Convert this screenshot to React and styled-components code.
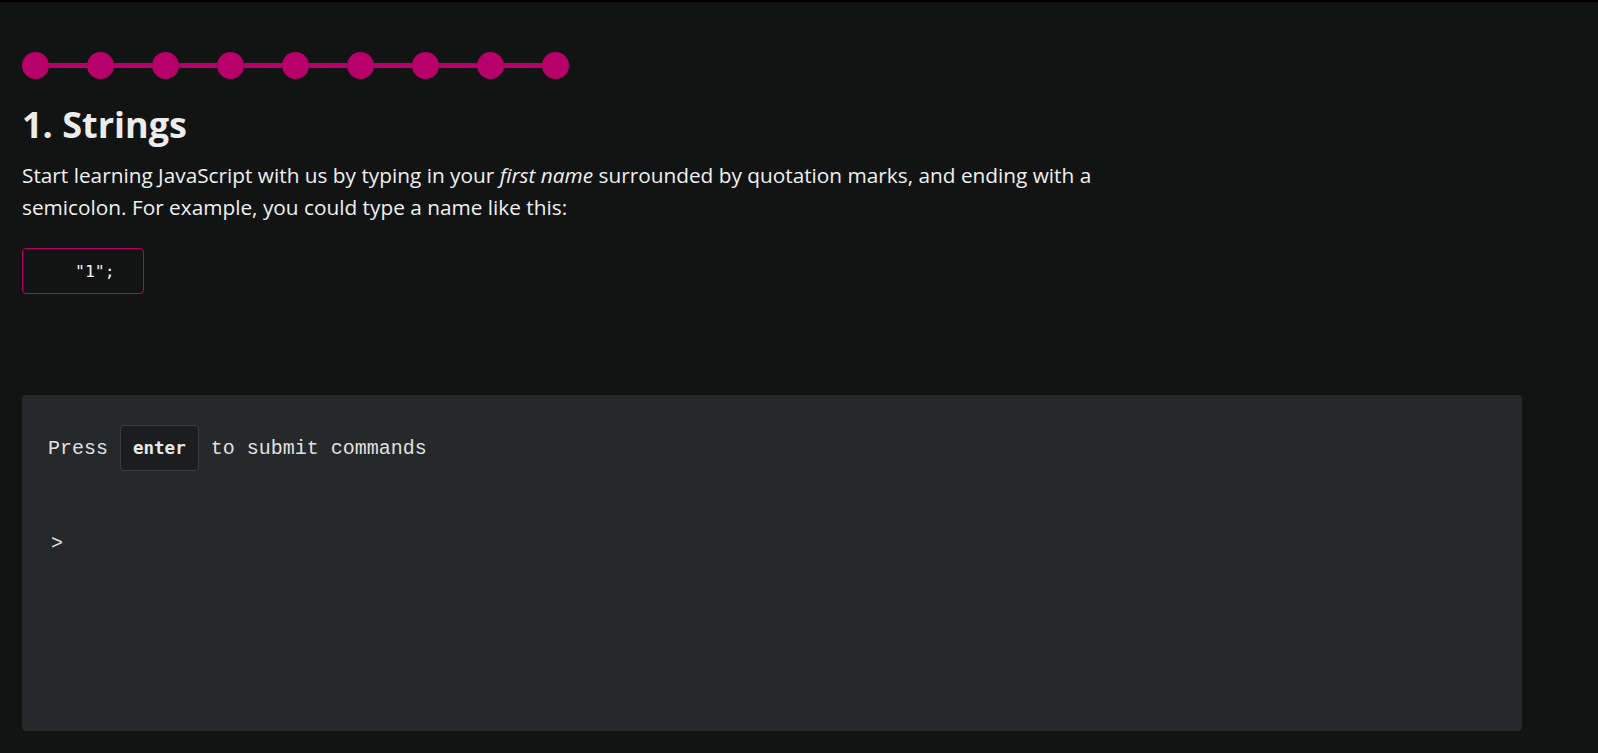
import React from "react"
import styled, { createGlobalStyle } from "styled-components"

const GlobalStyle = createGlobalStyle`
  html, body {
    margin: 0;
    padding: 0;
    background: #121414;
  }
  body {
    font-family: "Open Sans", "Noto Sans", sans-serif;
    color: #ececec;
  }
`

const TopStrip = styled.div`
  height: 2px;
  background: #000;
`

const Main = styled.main`
  padding: 50px 76px 40px 22px;
`

const Stepper = styled.div`
  display: flex;
  align-items: center;
  height: 27px;
`

const Dot = styled.span`
  width: 27px;
  height: 27px;
  border-radius: 50%;
  background: #b8006b;
  flex-shrink: 0;
`

const Connector = styled.span`
  width: 38px;
  height: 5px;
  background: #b8006b;
  flex-shrink: 0;
`

const Title = styled.h1`
  margin: 24px 0 0;
  font-size: 36px;
  line-height: 1.2;
  font-weight: 700;
  color: #ececec;
`

const Intro = styled.p`
  margin: 13px 0 0;
  max-width: 1100px;
  font-size: 20.8px;
  line-height: 32px;
  color: #f0f0f0;

  em {
    font-style: italic;
  }
`

const Example = styled.div`
  margin-top: 25px;
  width: 122px;
  height: 46px;
  box-sizing: border-box;
  display: flex;
  align-items: center;
  padding-left: 52px;
  border: 1px solid #b8006b;
  border-radius: 4px;
  font-family: "DejaVu Sans Mono", monospace;
  font-size: 16.5px;
  color: #f2f2f2;
  white-space: pre;
`

const Terminal = styled.section`
  margin-top: 101px;
  min-height: 336px;
  box-sizing: border-box;
  padding: 30px 26px;
  background: #25292a;
  border-radius: 4px;
  font-family: "Liberation Mono", "Courier New", monospace;
  font-size: 20px;
  color: #e0e0e0;
`

const Hint = styled.div`
  display: flex;
  align-items: baseline;
  white-space: pre;
`

const Key = styled.kbd`
  display: inline-block;
  padding: 12px 12px;
  background: #1c1d1f;
  border: 1px solid #3a3d40;
  border-radius: 4px;
  font-family: "DejaVu Sans Mono", monospace;
  font-size: 17.5px;
  font-weight: 700;
  color: #e8e8e8;
`

const Prompt = styled.div`
  margin-top: 61px;
  padding-left: 3px;
  line-height: 24px;
`

const steps = [1, 2, 3, 4, 5, 6, 7, 8, 9]

export default function App() {
  return (
    <>
      <GlobalStyle />
      <TopStrip />
      <Main>
        <Stepper>
          {steps.map((s, i) => (
            <React.Fragment key={s}>
              {i > 0 && <Connector />}
              <Dot />
            </React.Fragment>
          ))}
        </Stepper>
        <Title>1. Strings</Title>
        <Intro>
          Start learning JavaScript with us by typing in your <em>first name</em> surrounded by
          quotation marks, and ending with a semicolon. For example, you could type a name like this:
        </Intro>
        <Example>"1";</Example>
        <Terminal>
          <Hint>
            <span>Press </span>
            <Key>enter</Key>
            <span> to submit commands</span>
          </Hint>
          <Prompt>&gt;</Prompt>
        </Terminal>
      </Main>
    </>
  )
}
